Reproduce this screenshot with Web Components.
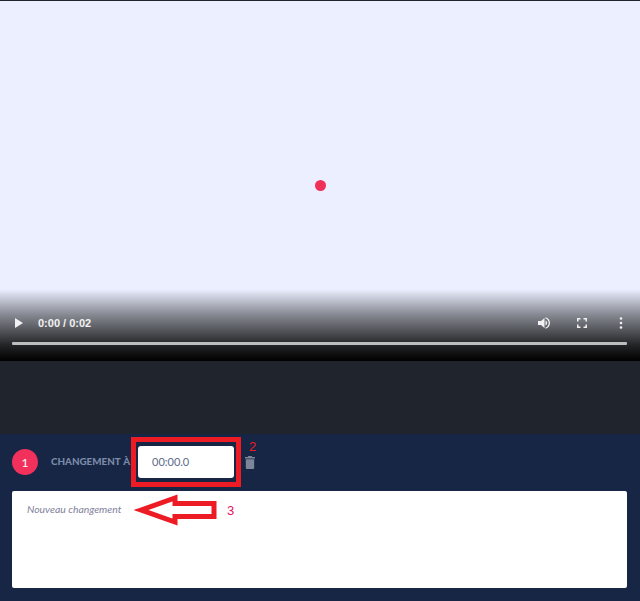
<!DOCTYPE html>
<html lang="fr">
<head>
<meta charset="utf-8">
<title>Changement</title>
<style>
  html, body { margin: 0; height: 601px; overflow: hidden; background: #20252d; }
  body { font-family: Lato, "Liberation Sans", sans-serif; }
</style>
</head>
<body>
<change-page></change-page>

<template id="video-tpl">
  <style>
    :host { display: block; height: 360px; margin-top: 1px; background: #ebefff; position: relative; font-family: "Liberation Sans", sans-serif; }
    .dot { position: absolute; left: 315px; top: 179px; width: 11px; height: 11px; border-radius: 50%; background: #ef3158; }
    .panel {
      position: absolute; left: 0; right: 0; bottom: 0; height: 72px;
      display: flex; flex-direction: column; justify-content: flex-end;
      background: linear-gradient(to bottom, rgba(0,0,0,0) 0%, rgba(0,0,0,.42) 35%, rgba(0,0,0,.62) 55%, rgba(0,0,0,.85) 78%, #000 100%);
    }
    .controls { display: flex; align-items: center; height: 20px; padding: 0 17px 0 14px; color: #f1f1f1; font-size: 11px; font-weight: bold; }
    .time { margin-left: 14px; flex: 1; }
    svg { display: block; fill: #f1f1f1; }
    .vol { margin-right: 26px; }
    .full { margin-right: 32px; }
    .bar { height: 3px; margin: 9px 13px 16px 12px; background: #bdbdbd; border-radius: 1px; }
  </style>
  <div class="dot"></div>
  <div class="panel">
    <div class="controls">
      <svg width="10" height="12" viewBox="0 0 10 12"><path d="M1 1v10l8-5z"/></svg>
      <span class="time">0:00 / 0:02</span>
      <svg class="vol" width="14" height="14" viewBox="0 0 14 14"><path d="M1 5v4h3l3.500 3V2L4 5z"/><path d="M8.500 4.400v5.200c1-.4 1.700-1.400 1.700-2.600S9.500 4.800 8.500 4.400z"/><path d="M8.500 1.200v1.300c1.900.5 3.200 2.400 3.200 4.500s-1.300 4-3.200 4.500v1.300c2.600-.6 4.500-3 4.500-5.800S11.100 1.800 8.500 1.200z"/></svg>
      <svg class="full" width="10" height="10" viewBox="0 0 10 10"><path d="M0 0h3.500v1.500h-2v2H0zM6.500 0H10v3.500H8.500v-2h-2zM0 6.500h1.500v2h2V10H0zM8.500 6.500H10V10H6.500V8.500h2z"/></svg>
      <svg width="4" height="12" viewBox="0 0 4 12"><circle cx="2" cy="1.500" r="1.300"/><circle cx="2" cy="6" r="1.300"/><circle cx="2" cy="10.500" r="1.300"/></svg>
    </div>
    <div class="bar"></div>
  </div>
</template>

<template id="row-tpl">
  <style>
    :host { display: flex; align-items: center; height: 32px; }
    .num { width: 26px; height: 26px; border-radius: 50%; background: #f1315c; color: #fff; font-size: 12px; display: flex; align-items: center; justify-content: center; }
    .label { margin-left: 13px; width: 87px; padding-bottom: 3px; white-space: nowrap; color: #7c8aa9; font-size: 9.800px; font-weight: 900; word-spacing: 1px; }
    input { box-sizing: border-box; width: 96px; height: 32px; border: 0; border-radius: 3px; background: #fff; padding: 0 14px 1px; color: #5c6a8a; font: 11px Lato, "Liberation Sans", sans-serif; outline: none; }
    svg { margin-left: 11px; display: block; fill: #7d8698; }
  </style>
  <span class="num"><slot name="num"></slot></span>
  <span class="label"><slot name="label"></slot></span>
  <input value="00:00.0">
  <svg width="10" height="13" viewBox="0 0 12 14" preserveAspectRatio="none"><path d="M4 0h4l.7 1H12v1.600H0V1h3.300zM1 3.600h10V12.600c0 .8-.6 1.400-1.400 1.400H2.400C1.600 14 1 13.400 1 12.600z"/></svg>
</template>

<template id="note-tpl">
  <style>
    :host { display: block; height: 97px; box-sizing: border-box; margin-top: 13px; background: #fff; border-radius: 2px; padding: 12px 15px; color: #7f7f9b; font-size: 10.400px; font-style: italic; }
  </style>
  <slot></slot>
</template>

<template id="page-tpl">
  <style>
    :host { display: block; height: 601px; position: relative; background: #20252d; box-shadow: inset 0 1px 0 #14171c; }
    .spacer { height: 73px; }
    .form { height: 167px; box-sizing: border-box; background: #162644; padding: 12px 13px 0 12px; }
    .box { position: absolute; left: 131px; top: 436px; width: 100px; height: 40px; border: 5px solid #ed1c24; }
    .arrow { position: absolute; left: 133px; top: 492px; }
    .mark { position: absolute; font: 13px "Liberation Sans", sans-serif; color: #ed1c24; }
    .m2 { left: 249px; top: 438px; }
    .m3 { left: 227px; top: 502px; color: #e0155f; }
  </style>
  <change-video></change-video>
  <div class="spacer"></div>
  <div class="form">
    <change-row><span slot="num">1</span><span slot="label">CHANGEMENT À</span></change-row>
    <change-note>Nouveau changement</change-note>
  </div>
  <div class="box"></div>
  <svg class="arrow" width="84" height="34" viewBox="0 0 84 34"><path d="M8 17L42 5v5.500h39v13H42V29z" fill="none" stroke="#ed1c24" stroke-width="5"/></svg>
  <span class="mark m2">2</span>
  <span class="mark m3">3</span>
</template>

<script>
class BaseElement extends HTMLElement {
  constructor(tpl) {
    super();
    this.attachShadow({ mode: 'open' });
    this.shadowRoot.appendChild(document.getElementById(tpl).content.cloneNode(true));
  }
}

class ChangeVideo extends BaseElement { constructor() { super('video-tpl'); } }
class ChangeRow extends BaseElement { constructor() { super('row-tpl'); } }
class ChangeNote extends BaseElement { constructor() { super('note-tpl'); } }
class ChangePage extends BaseElement { constructor() { super('page-tpl'); } }

customElements.define('change-video', ChangeVideo);
customElements.define('change-row', ChangeRow);
customElements.define('change-note', ChangeNote);
customElements.define('change-page', ChangePage);
</script>
</body>
</html>
